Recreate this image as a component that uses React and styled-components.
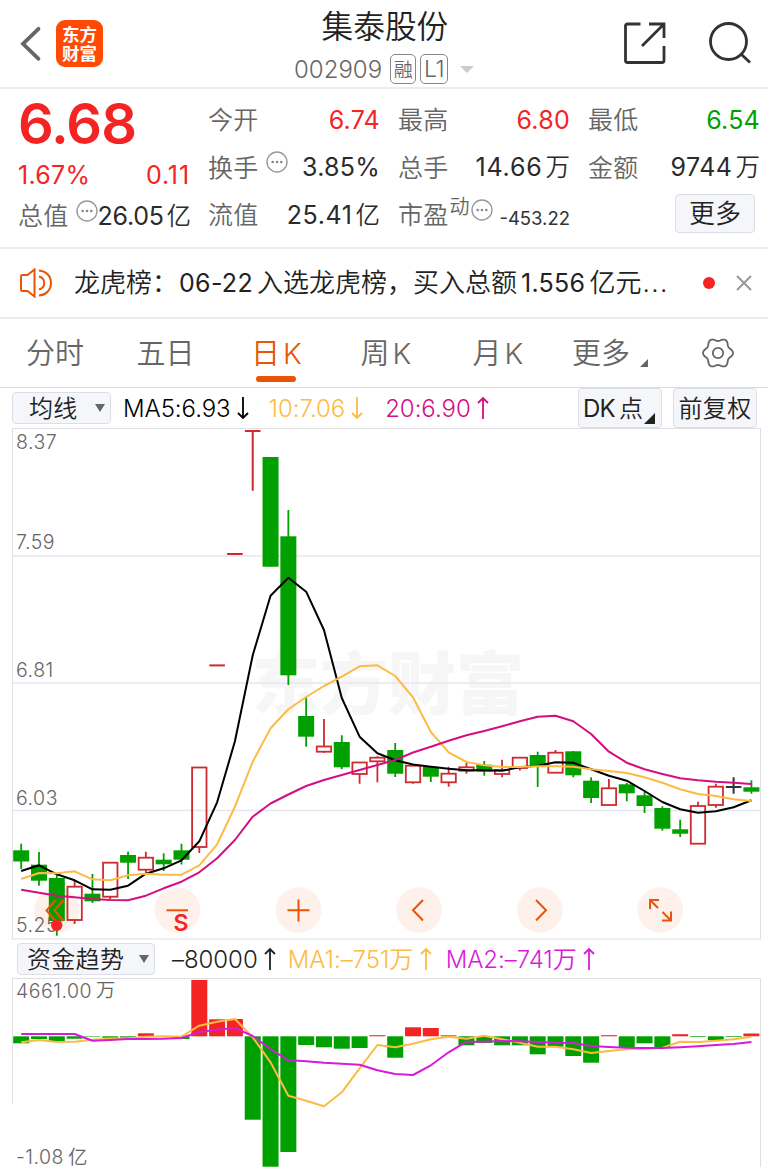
import React from "react";
import styled, { createGlobalStyle } from "styled-components";

const RED = "#f42424";
const GREEN = "#00a000";
const ORANGE = "#e95504";

const STEP = 17.81;
const FIRST = 21.2;
const xAt = (i) => FIRST + STEP * i;

// [kind, body top, body bottom, high, low]
const candles = [
  ["g", 850.3, 861.5, 843.7, 869],
  ["g", 864.7, 880.7, 852, 885.7],
  ["g", 878, 921, 874, 935.7],
  ["r", 886.7, 920, 881, 924],
  ["g", 893.7, 901.3, 874, 903],
  ["r", 862.7, 896.7, 862, 899.3],
  ["g", 855, 862.7, 851.7, 879],
  ["r", 857.7, 869.7, 851.7, 873],
  ["g", 859.7, 864.3, 853.3, 871],
  ["g", 850.3, 859.7, 843.7, 864.5],
  ["r", 767.5, 847, 767, 853],
  ["t", 665.4, 665.4, 665.4, 665.4],
  ["t", 554, 554, 554, 554],
  ["t", 431, 431, 431, 490.7],
  ["g", 457, 566.7, 457, 566.7],
  ["g", 536.3, 675.3, 510, 685],
  ["g", 716, 736.7, 697.3, 746.7],
  ["r", 746.5, 751.7, 719, 752.7],
  ["g", 742, 767.3, 735.3, 769.3],
  ["r", 762.5, 774, 762, 783.7],
  ["r", 757.7, 761.3, 756.3, 782.3],
  ["g", 750, 773.7, 743, 777],
  ["r", 765.7, 782.3, 765, 783.7],
  ["g", 766.7, 776.7, 766, 782],
  ["r", 773.7, 782.3, 766.7, 786.7],
  ["r", 767.3, 770.7, 762.7, 773.7],
  ["g", 764.7, 771.7, 761, 775.7],
  ["r", 770, 774, 759.7, 777.3],
  ["r", 757.7, 768, 757, 770.5],
  ["g", 755, 766.3, 751.7, 787],
  ["r", 752.7, 772.7, 750, 773],
  ["g", 751.3, 775.3, 751, 777.3],
  ["g", 780.7, 798, 777.3, 803],
  ["r", 788.3, 805, 779, 805],
  ["g", 784.3, 793.3, 783, 801.3],
  ["g", 795.3, 806, 791.7, 813],
  ["g", 808, 828.7, 806.3, 830.7],
  ["g", 829.3, 833.7, 819.7, 837],
  ["r", 806, 843.7, 801.7, 844],
  ["r", 786.7, 805, 783.7, 807.7],
  ["k", 787, 787, 777.3, 793.7],
  ["g", 787.3, 791.7, 780.3, 793.7],
];

const ma5 = [
  871, 865.3, 874.3, 880.3, 889.3, 889.7, 885.7, 873.7, 868.3, 860.3, 841.3,
  802.3, 741.3, 655.3, 595.7, 577.7, 591.7, 630, 698, 736.7, 753.3, 760.3,
  764.5, 766.7, 768.7, 770.3, 770.3, 770.7, 767.3, 765.7, 762.3, 762.7, 769.3,
  775.7, 780.7, 791, 802, 809.3, 812.7, 811.3, 807.3, 800.3,
];
const ma10 = [
  879, 873, 873.3, 871.3, 879.3, 880.3, 875.3, 873.7, 874.7, 874.7, 865.3,
  844.3, 806.7, 761.7, 728.3, 709.3, 697, 686, 676.7, 666.3, 665.3, 676, 697.3,
  732, 752.3, 762, 765.3, 767, 767, 766.3, 766.3, 766.7, 769.3, 771, 773, 777.3,
  782.7, 789.3, 794, 796, 799.3, 801,
];
const ma20 = [
  889.7, 892.7, 895.7, 897.3, 899, 900, 900.3, 895.7, 888.3, 881.7, 872.3,
  858.3, 840, 816.7, 803.5, 794.5, 786, 780, 775, 770, 765, 760, 752.5, 746.7,
  740.7, 735.3, 731, 726.3, 721.3, 716.7, 715.7, 721.3, 734, 751.7, 762.7,
  769.3, 774, 778.3, 780.3, 781.7, 782.7, 784,
];

const ZERO = 1036.3;
const flow = [
  1043.3, 1039, 1041, 1038.7, 1036.8, 1037.7, 1037.7, 1033.3, 1036, 1039, 980,
  1019.3, 1019, 1119.7, 1166.7, 1152, 1045, 1047.3, 1048.7, 1048, 1035.2,
  1057.7, 1027.3, 1028, 1035.3, 1045.3, 1043, 1045.3, 1045.3, 1054.3, 1046.7,
  1056, 1062.7, 1035.2, 1047.3, 1043.3, 1047.3, 1034.2, 1037, 1040.3, 1037,
  1033.5,
];
const flowMa1 = [
  1042.3, 1040, 1042, 1041.7, 1039.7, 1038.7, 1038.3, 1036.7, 1036.3, 1036.7,
  1025.7, 1021.7, 1019, 1037.3, 1062.3, 1095.7, 1100.7, 1106.3, 1092.3, 1068.3,
  1045, 1047.3, 1043.7, 1039.3, 1036.7, 1038.7, 1035.7, 1039.3, 1042.7, 1046.7,
  1046.7, 1049.3, 1053, 1051, 1049.3, 1048.7, 1047.7, 1041.7, 1042, 1040.7,
  1039.3, 1036.7,
];
const flowMa2 = [
  1034, 1034, 1034, 1034, 1040.7, 1040, 1039, 1039, 1038.7, 1038, 1032, 1029.7,
  1028, 1036, 1049, 1060.3, 1061.3, 1062.7, 1063.7, 1064.7, 1070.3, 1074, 1075,
  1065.3, 1052.3, 1041.7, 1041.7, 1041, 1041.3, 1042, 1042.7, 1043, 1046, 1047,
  1047.7, 1048, 1048, 1047.3, 1046.3, 1045, 1044, 1042,
];

const toPoints = (ys) => ys.map((y, i) => `${xAt(i)},${y}`).join(" ");

// six-lobed outline of the settings gear
const gearPoints = Array.from({ length: 120 }, (_, i) => {
  const angle = (i * Math.PI) / 60;
  const r = 13.5 + 1.5 * Math.cos(6 * angle);
  return `${16 + r * Math.cos(angle)},${15 + r * Math.sin(angle)}`;
}).join(" ");

function Line({ ys, color }) {
  return (
    <polyline
      points={toPoints(ys)}
      fill="none"
      stroke={color}
      strokeWidth="2"
      strokeLinejoin="round"
    />
  );
}

function Candle({ index, data }) {
  const [kind, top, bottom, high, low] = data;
  const x = xAt(index);
  if (kind === "t" || kind === "k") {
    const color = kind === "t" ? "#cd2b30" : "#333";
    return (
      <g stroke={color} strokeWidth="2">
        <path d={`M${x - 7.8} ${top}H${x + 7.8}M${x} ${high}V${low}`} />
      </g>
    );
  }
  if (kind === "g") {
    return (
      <g>
        <rect x={x - 0.9} y={high} width="1.8" height={low - high} fill={GREEN} />
        <rect x={x - 8} y={top} width="16" height={bottom - top} fill={GREEN} />
      </g>
    );
  }
  return (
    <g stroke="#cd2b30" strokeWidth="1.8" fill="none">
      <path d={`M${x} ${high}V${top}M${x} ${bottom}V${low}`} />
      <rect x={x - 7.2} y={top} width="14.4" height={bottom - top} />
    </g>
  );
}

function Dots() {
  return (
    <DotsIcon viewBox="0 0 22 22">
      <circle cx="11" cy="11" r="10" fill="none" stroke="#999" strokeWidth="1.4" />
      <circle cx="6.7" cy="11" r="1.3" fill="#888" />
      <circle cx="11" cy="11" r="1.3" fill="#888" />
      <circle cx="15.3" cy="11" r="1.3" fill="#888" />
    </DotsIcon>
  );
}

function Arrow({ up }) {
  return (
    <ArrowIcon viewBox="0 0 12 24">
      <path d={up ? "M6 23V2M1 7L6 2L11 7" : "M6 1V22M1 17L6 22L11 17"} />
    </ArrowIcon>
  );
}

function Header() {
  return (
    <TopBar>
      <BackIcon viewBox="0 0 22 36">
        <path d="M18.500 2.800L3 17.800L18.500 32.800" />
      </BackIcon>
      <Logo>
        <span>东方</span>
        <span>财富</span>
      </Logo>
      <TitleBlock>
        <h1>集泰股份</h1>
        <CodeRow>
          <Code>002909</Code>
          <Tag $width={26}>融</Tag>
          <Tag $width={28} $size={23}>
            L1
          </Tag>
          <Caret />
        </CodeRow>
      </TitleBlock>
      <ShareIcon viewBox="0 0 44 44">
        <path d="M17.500 3H4.500Q2.500 3 2.500 5V39.500Q2.500 41.500 4.500 41.500H39Q41 41.500 41 39.500V25M26 3H41V17M41 3L19 25" />
      </ShareIcon>
      <SearchIcon viewBox="0 0 44 44">
        <circle cx="20.500" cy="20.500" r="18" />
        <path d="M33 33L42 41.500" />
      </SearchIcon>
    </TopBar>
  );
}

function Stats() {
  return (
    <StatsGrid>
      <Column>
        <Price>6.68</Price>
        <Row $height={54}>
          <Num $color={RED}>1.67%</Num>
          <Num $color={RED} $spacing={0.9}>
            0.11
          </Num>
        </Row>
        <Row $height={27}>
          <Label>
            <Cjk>总值</Cjk>
            <Dots />
          </Label>
          <Num $spacing={-0.3}>
            26.05<Unit>亿</Unit>
          </Num>
        </Row>
      </Column>
      <Column>
        <Row>
          <Label>
            <Cjk>今开</Cjk>
          </Label>
          <Num $color={RED}>6.74</Num>
        </Row>
        <Row>
          <Label>
            <Cjk>换手</Cjk>
            <Dots />
          </Label>
          <Num>3.85%</Num>
        </Row>
        <Row>
          <Label>
            <Cjk>流值</Cjk>
          </Label>
          <Num $spacing={0.6}>
            25.41<Unit>亿</Unit>
          </Num>
        </Row>
      </Column>
      <Column>
        <Row>
          <Label>
            <Cjk>最高</Cjk>
          </Label>
          <Num $color={RED}>6.80</Num>
        </Row>
        <Row>
          <Label>
            <Cjk>总手</Cjk>
          </Label>
          <Num $spacing={0.8}>
            14.66<Unit>万</Unit>
          </Num>
        </Row>
        <Row>
          <Label>
            <Cjk>市盈</Cjk>
            <Sup>动</Sup>
            <Dots />
          </Label>
          <SmallNum>-453.22</SmallNum>
        </Row>
      </Column>
      <Column>
        <Row>
          <Label>
            <Cjk>最低</Cjk>
          </Label>
          <Num $color={GREEN}>6.54</Num>
        </Row>
        <Row>
          <Label>
            <Cjk>金额</Cjk>
          </Label>
          <Num $spacing={0.5}>
            9744<Unit>万</Unit>
          </Num>
        </Row>
        <MoreButton>更多</MoreButton>
      </Column>
    </StatsGrid>
  );
}

function News() {
  return (
    <NewsBar>
      <SpeakerIcon viewBox="0 0 34 30">
        <path d="M2 8.500Q2 7 3.500 7H8.500L15.500 1.500V28.500L8.500 23H3.500Q2 23 2 21.500ZM20 2.500C27 3 32 8 32 15S27 27 20 27.500M20 8.500C27 10.500 27 19.500 20 21.500" />
      </SpeakerIcon>
      <NewsText>
        龙虎榜：<Digits $left={1}>06-22</Digits>入选龙虎榜，买入总额
        <Digits $left={4}>1.556</Digits>亿元<Ellipsis>...</Ellipsis>
      </NewsText>
      <RedDot />
      <CloseIcon viewBox="0 0 16 16">
        <path d="M1 1L15 15M15 1L1 15" />
      </CloseIcon>
    </NewsBar>
  );
}

const tabs = [
  { name: "分时", width: 110.5 },
  { name: "五日", width: 114.5 },
  { name: "日", k: true, active: true, width: 109.5 },
  { name: "周", k: true, width: 112 },
  { name: "月", k: true, width: 99.5 },
  { name: "更多", width: 60 },
];

function Tabs() {
  return (
    <TabBar>
      {tabs.map((tab) => (
        <Tab key={tab.name} $active={tab.active} $width={tab.width}>
          {tab.name}
          {tab.k && <TabK>K</TabK>}
        </Tab>
      ))}
      <Corner $size={8} $color="#666" />
      <GearIcon viewBox="0 0 32 30">
        <polygon points={gearPoints} />
        <circle cx="16" cy="15" r="5.200" />
      </GearIcon>
    </TabBar>
  );
}

function Indicators() {
  return (
    <IndicatorBar>
      <Select $width={99}>
        <Cjk>均线</Cjk>
        <Triangle />
      </Select>
      <Legend $left={12} $color="#000">
        MA5:6.93
        <Arrow />
      </Legend>
      <Legend $left={20} $color="#fdbb43">
        10:7.06
        <Arrow />
      </Legend>
      <Legend $left={22} $color="#d40f82">
        20:6.90
        <Arrow up />
      </Legend>
      <SquareButton $width={84}>
        <DkLabel>DK</DkLabel>
        <Cjk>点</Cjk>
        <Corner $size={11} $color="#222" />
      </SquareButton>
      <SquareButton $width={84}>
        <Cjk>前复权</Cjk>
      </SquareButton>
    </IndicatorBar>
  );
}

const gridLines = [556, 683, 810.5];
const priceLabels = [
  ["8.37", 449],
  ["7.59", 549],
  ["6.81", 677],
  ["6.03", 805],
  ["5.25", 932],
];
const controls = [57, 177.5, 298.5, 419, 539.8, 660.3];

function PriceChart() {
  return (
    <Chart viewBox="12 428 749 512" $height={512}>
      <rect x="12.500" y="428.500" width="748" height="510.500" fill="#fff" stroke="#dfdfe3" />
      <Watermark x="252" y="709">
        东方财富
      </Watermark>
      {gridLines.map((y) => (
        <line key={y} x1="13" x2="760" y1={y} y2={y} stroke="#e6e6f0" strokeWidth="1.600" />
      ))}
      {controls.map((x) => (
        <circle key={x} cx={x} cy="910" r="22.800" fill="#fef0ea" />
      ))}
      {priceLabels.map(([label, y]) => (
        <AxisText key={label} x="16" y={y}>
          {label}
        </AxisText>
      ))}
      {candles.map((data, i) => (
        <Candle key={i} index={i} data={data} />
      ))}
      <Line ys={ma5} color="#000" />
      <Line ys={ma10} color="#fdbb43" />
      <Line ys={ma20} color="#d40f82" />
      <g fill="none" stroke={ORANGE} strokeWidth="2">
        <path d="M55.500 900L46.500 910.500L55.500 921M63.500 900L54.500 910.500L63.500 921" />
        <path d="M166.500 910.300H188" />
        <path d="M287.500 910.300H309.500M298.500 899.500V921.500" />
        <path d="M423 900L413 910.300L423 920.500" />
        <path d="M536 900L546 910.300L536 920.500" />
        <path d="M650 909V900H659M650 900L658 908M662 920.500H671V911.500M671 920.500L662.500 912" />
      </g>
      <circle cx="56.700" cy="925.300" r="5.700" fill={RED} />
      <SellMark x="173.500" y="930.500">
        S
      </SellMark>
    </Chart>
  );
}

function FlowHeader() {
  return (
    <FlowBar>
      <Select $width={138}>
        <Cjk>资金趋势</Cjk>
        <Triangle />
      </Select>
      <Legend $left={17} $color="#222">
        –80000
        <Arrow up />
      </Legend>
      <Legend $left={12} $color="#fdbb43">
        MA1:–751<Cjk>万</Cjk>
        <Arrow up />
      </Legend>
      <Legend $left={14} $color="#d71bdc">
        MA2:–741<Cjk>万</Cjk>
        <Arrow up />
      </Legend>
    </FlowBar>
  );
}

function FlowChart() {
  return (
    <Chart viewBox="12 978 749 189" $height={189}>
      <path d="M12.500 1104V978.500H760.500V1167" fill="none" stroke="#dfdfe3" />
      <AxisText x="16" y="998">
        4661.00
      </AxisText>
      <AxisText x="96" y="997">
        万
      </AxisText>
      <AxisText x="16" y="1164">
        -1.08
      </AxisText>
      <AxisText x="68" y="1163.500">
        亿
      </AxisText>
      {flow.map((y, i) => (
        <rect
          key={i}
          x={xAt(i) - 8}
          y={Math.min(y, ZERO)}
          width="16"
          height={Math.abs(y - ZERO)}
          fill={y < ZERO ? RED : GREEN}
        />
      ))}
      <Line ys={flowMa1} color="#fdbb43" />
      <Line ys={flowMa2} color="#d71bdc" />
    </Chart>
  );
}

export default function App() {
  return (
    <Page>
      <GlobalStyle />
      <Header />
      <Stats />
      <News />
      <Tabs />
      <Indicators />
      <PriceChart />
      <FlowHeader />
      <FlowChart />
    </Page>
  );
}

const GlobalStyle = createGlobalStyle`
  * {
    box-sizing: border-box;
    margin: 0;
    padding: 0;
  }

  body {
    background: #fff;
    overflow: hidden;
    font-family: Inter, "Noto Sans CJK SC", sans-serif;
    text-autospace: no-autospace;
  }
`;

const Page = styled.main`
  width: 768px;
  height: 1167px;
  overflow: hidden;
  color: #333;
  white-space: nowrap;

  svg {
    flex: none;
    display: block;
  }
`;

//lifts chinese glyphs to the optical centre of the digits
const Cjk = styled.span`
  padding-bottom: 3px;
  font-weight: 350;
  letter-spacing: 0.3px;
`;

//header
const TopBar = styled.header`
  height: 89px;
  border-bottom: 2px solid #ececec;
  display: flex;
  align-items: flex-start;
`;

const BackIcon = styled.svg`
  width: 22px;
  height: 36px;
  margin: 26px 0 0 20px;
  fill: none;
  stroke: #666;
  stroke-width: 3.8;
  stroke-linecap: round;
`;

const Logo = styled.div`
  width: 47px;
  height: 47px;
  margin: 20px 0 0 14px;
  padding-bottom: 2px;
  border-radius: 9px;
  background: #ff4a05;
  color: #fff;
  font-family: "Noto Sans CJK SC", sans-serif;
  font-size: 17.5px;
  font-weight: 700;
  line-height: 19px;
  display: flex;
  flex-direction: column;
  align-items: center;
  justify-content: center;
`;

const TitleBlock = styled.div`
  width: 200px;
  margin-left: 185px;

  h1 {
    height: 54px;
    padding-left: 33.5px;
    font-size: 31.7px;
    font-weight: 350;
    line-height: 54px;
    color: #222;
  }
`;

const CodeRow = styled.div`
  display: flex;
  align-items: center;
  height: 30px;
  padding-left: 6px;
`;

const Code = styled.span`
  width: 96px;
  font-size: 24px;
  font-weight: 350;
  color: #666;
`;

const Tag = styled.span`
  width: ${(props) => props.$width}px;
  height: 30px;
  margin-right: 4px;
  padding-bottom: ${(props) => (props.$size ? 0 : 2)}px;
  border: 1.5px solid #888;
  border-radius: 5px;
  display: flex;
  align-items: center;
  justify-content: center;
  font-size: ${(props) => props.$size || 19}px;
  font-weight: 350;
  letter-spacing: -0.5px;
  color: #666;
`;

const Caret = styled.i`
  margin-left: 8px;
  border: 7px solid transparent;
  border-top-color: #ccc;
  border-bottom: 0;
`;

const ShareIcon = styled.svg`
  width: 44px;
  height: 44px;
  margin: 21px 0 0 135px;
  fill: none;
  stroke: #333;
  stroke-width: 2.8;
`;

const SearchIcon = styled(ShareIcon)`
  margin-left: 41px;
`;

//quote numbers
const StatsGrid = styled.section`
  height: 160px;
  padding: 7px 8px 0 18px;
  border-bottom: 2px solid #ececec;
  display: grid;
  grid-template-columns: repeat(4, 172px);
  column-gap: 18px;
`;

const Column = styled.div`
  display: flex;
  flex-direction: column;
`;

const Row = styled.div`
  height: ${(props) => props.$height || 47.5}px;
  display: flex;
  align-items: center;
  justify-content: space-between;
`;

const Price = styled.strong`
  height: 52px;
  font-size: 56px;
  font-weight: 600;
  line-height: 56px;
  letter-spacing: -1px;
  color: ${RED};
`;

const Label = styled.span`
  display: flex;
  align-items: center;
  font-size: 25px;
  color: #666;
`;

const Num = styled.span`
  display: flex;
  align-items: center;
  font-size: 25px;
  font-weight: 370;
  letter-spacing: ${(props) => props.$spacing ?? 0.25}px;
  color: ${(props) => props.$color || "#2b2b2b"};
`;

const Unit = styled.span`
  margin-left: 3px;
  padding-bottom: 3px;
  font-size: 24.5px;
  font-weight: 350;
  letter-spacing: 0;
`;

const Sup = styled.span`
  margin: 0 0 18px 1px;
  font-size: 20px;
  font-weight: 350;
`;

const SmallNum = styled.span`
  font-size: 18.5px;
  padding-top: 7px;
`;

const DotsIcon = styled.svg`
  width: 22px;
  height: 22px;
  margin: 0 0 10px 7px;

  ${Sup} + & {
    margin-left: 1px;
  }
`;

const MoreButton = styled.button`
  width: 80px;
  height: 39px;
  margin: 3px 0 0 87px;
  border: 1.5px solid #dcdee6;
  border-radius: 4px;
  background: #f5f6fa;
  font-family: inherit;
  font-size: 26px;
  font-weight: 350;
  line-height: 34px;
  color: #222;
`;

//news
const NewsBar = styled.section`
  height: 70px;
  border-bottom: 2px solid #ececec;
  display: flex;
  align-items: center;
`;

const SpeakerIcon = styled.svg`
  width: 34px;
  height: 30px;
  margin-left: 19px;
  fill: none;
  stroke: ${ORANGE};
  stroke-width: 2;
`;

const NewsText = styled.p`
  width: 620px;
  margin-left: 21px;
  padding-bottom: 5px;
  font-size: 26px;
  font-weight: 350;
  color: #222;
`;

const Digits = styled.span`
  margin: 0 4px 0 ${(props) => props.$left}px;
  font-size: 25px;
  font-weight: 370;
  letter-spacing: 0.3px;
`;

const Ellipsis = styled.span`
  margin-left: 1px;
  letter-spacing: 1.5px;
`;

const RedDot = styled.i`
  width: 12px;
  height: 12px;
  margin-left: 9px;
  border-radius: 50%;
  background: ${RED};
`;

const CloseIcon = styled.svg`
  width: 16px;
  height: 16px;
  margin-left: 21px;
  fill: none;
  stroke: #999;
  stroke-width: 2;
`;

//tabs
const TabBar = styled.nav`
  height: 69px;
  padding-left: 26px;
  border-bottom: 1.5px solid #d9dbe3;
  display: flex;
`;

const Tab = styled.a`
  position: relative;
  width: ${(props) => props.$width}px;
  font-size: 29px;
  font-weight: 350;
  line-height: 69px;
  color: ${(props) => (props.$active ? ORANGE : "#666")};

  &::after {
    content: "";
    display: ${(props) => (props.$active ? "block" : "none")};
    position: absolute;
    left: 5px;
    bottom: 5px;
    width: 40px;
    height: 6px;
    border-radius: 3px;
    background: ${ORANGE};
  }
`;

const TabK = styled.span`
  margin-left: 3px;
`;

const Corner = styled.i`
  align-self: flex-end;
  border-bottom: ${(props) => props.$size}px solid ${(props) => props.$color};
  border-left: ${(props) => props.$size}px solid transparent;

  ${TabBar} & {
    margin: 0 0 20px 8px;
  }
`;

const GearIcon = styled.svg`
  width: 32px;
  height: 30px;
  margin: 19px 0 0 54px;
  fill: none;
  stroke: #666;
  stroke-width: 1.8;
`;

//indicators
const IndicatorBar = styled.div`
  height: 40px;
  padding-left: 12px;
  display: flex;
  align-items: center;
`;

const Select = styled.div`
  width: ${(props) => props.$width}px;
  height: 32px;
  padding: 0 5px 0 ${(props) => (props.$width > 100 ? 9 : 16)}px;
  border: 1.5px solid #dcdee6;
  border-radius: 4px;
  background: #f5f6fa;
  display: flex;
  align-items: center;
  justify-content: space-between;
  font-size: 24px;
  color: #222;
`;

const Triangle = styled.i`
  border: 5px solid transparent;
  border-top: 8px solid #666;
  border-bottom: 0;
`;

const Legend = styled.span`
  margin-left: ${(props) => props.$left}px;
  display: flex;
  align-items: center;
  font-size: 24px;
  font-weight: 350;
  letter-spacing: -0.05px;
  color: ${(props) => props.$color};
`;

const ArrowIcon = styled.svg`
  width: 12px;
  height: 24px;
  margin-left: 6px;
  fill: none;
  stroke: currentColor;
  stroke-width: 1.8;
`;

const SquareButton = styled.div`
  width: ${(props) => props.$width}px;
  height: 40px;
  border: 1.5px solid #dcdee6;
  border-radius: 4px;
  background: #f5f6fa;
  display: flex;
  align-items: center;
  justify-content: center;
  font-size: 24px;
  color: #222;

  &:nth-child(5) {
    justify-content: flex-start;
    margin: 0 11px 0 auto;
    padding-left: 4px;
  }

  &:nth-child(6) {
    margin-right: 11px;
  }

  ${Corner} {
    margin: 0 0 3px 1px;
  }
`;

const DkLabel = styled.span`
  margin-right: 4px;
  font-weight: 370;
  letter-spacing: -0.7px;
`;

//charts
const Chart = styled.svg`
  width: 749px;
  height: ${(props) => props.$height}px;
  margin-left: 12px;
`;

const AxisText = styled.text`
  font-size: 19.5px;
  font-weight: 350;
  letter-spacing: 0.5px;
  fill: #666;
`;

const Watermark = styled.text`
  font-family: "Noto Sans CJK SC", sans-serif;
  font-size: 68px;
  font-weight: 900;
  fill: #f6f6f6;
`;

const SellMark = styled.text`
  font-size: 23px;
  font-weight: 600;
  fill: ${RED};
`;

const FlowBar = styled.div`
  height: 38px;
  padding-left: 17px;
  display: flex;
  align-items: center;
`;
